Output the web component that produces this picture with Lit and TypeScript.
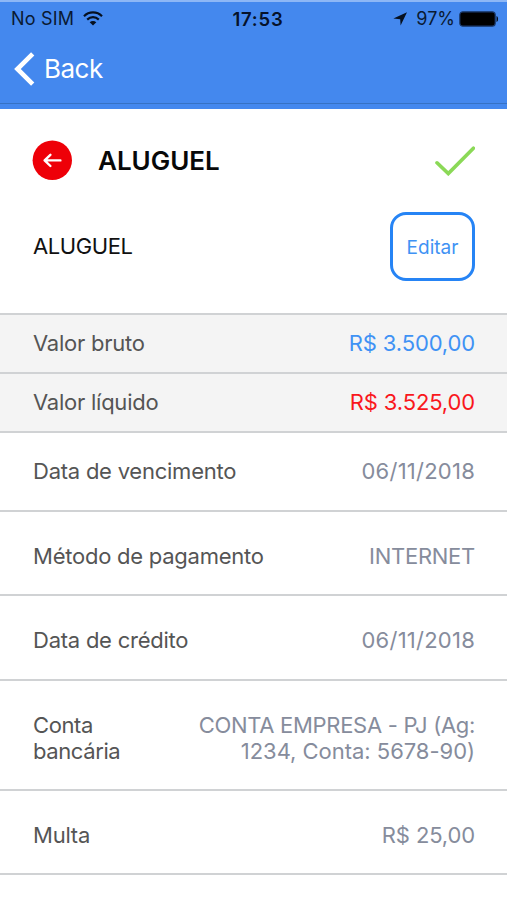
import { LitElement, html, css } from "lit";
import { customElement, property } from "lit/decorators.js";

@customElement("status-bar")
class StatusBar extends LitElement {
  static styles = css`
    :host { display: grid; grid-template-columns: 1fr auto 1fr; align-items: center; box-sizing: border-box; height: 32px; padding: 0 8px 0 11px; color: #0a1a33; font-size: 18px; line-height: 32px; }
    .side { display: flex; align-items: center; }
    .right { justify-content: flex-end; }
    .sim { letter-spacing: 0.2px; }
    .time { font-weight: 600; font-size: 18.5px; letter-spacing: 0.8px; padding-left: 6px; color: #06122a; }
    .wifi { margin-left: 9px; }
    .arrow { margin-right: 9px; }
    .pct { letter-spacing: 0; margin-right: 4px; }
    .sim, .time, .pct { padding-top: 1px; }
    svg { display: block; }
  `;
  render() {
    return html`
      <div class="side">
        <span class="sim">No SIM</span>
        <svg class="wifi" width="20" height="15" viewBox="0 0 20 15">
          <g fill="none" stroke="#06101f" stroke-width="2.2">
            <path d="M1 5.2C6 .2 14 .2 19 5.2" />
            <path d="M4.2 8.6C7.6 5.4 12.4 5.4 15.8 8.6" />
          </g>
          <path d="M6.7 11.2C8.6 9.5 11.4 9.5 13.3 11.2L10 14.6Z" fill="#06101f" />
        </svg>
      </div>
      <span class="time">17:53</span>
      <div class="side right">
        <svg class="arrow" width="14" height="14" viewBox="0 0 14 14"><path d="M14 .2L7.6 13.6L7.2 7.2L.4 6.4Z" fill="#06101f" /></svg>
        <span class="pct">97%</span>
        <svg width="40" height="16" viewBox="0 0 40 16">
          <rect x=".8" y=".8" width="35.4" height="14.4" rx="3" fill="#000" stroke="#1c3b6e" stroke-width="1.2" />
          <path d="M37.5 5C39.6 5.6 39.6 10.4 37.5 11Z" fill="#06101f" />
        </svg>
      </div>
    `;
  }
}

@customElement("detail-row")
class DetailRow extends LitElement {
  @property() label = "";
  @property() value = "";
  static styles = css`
    :host { display: flex; justify-content: space-between; align-items: flex-start; box-sizing: border-box; min-height: 84px; padding: 31px 32px 25px 33px; border-bottom: 2px solid #d0d2d4; font-size: 22px; line-height: 26px; color: #555; }
    :host([shaded]) { background: #f4f4f4; min-height: 59px; padding: 15px 32px 16px 33px; }
    :host([first]) { min-height: 79px; padding: 25px 32px 25px 33px; }
    :host([tall]) { min-height: 85px; }
    .label { max-width: 240px; letter-spacing: -0.24px; }
    :host([narrow]) .label { width: 110px; letter-spacing: -0.4px; }
    .value { max-width: 300px; text-align: right; color: #868c9c; letter-spacing: -0.13px; }
    :host([date]) .value { letter-spacing: 0.24px; }
    :host([caps]) .value { letter-spacing: -0.27px; }
    :host([narrow]) .value { letter-spacing: -0.03px; }
    :host([narrow]) .value::first-line { letter-spacing: -0.3px; }
    :host([tone="blue"]) .value { color: #3f92f4; }
    :host([tone="red"]) .value { color: #f9171c; }
  `;
  render() {
    return html`<div class="label">${this.label}</div><div class="value">${this.value}</div>`;
  }
}

@customElement("app-root")
class AppRoot extends LitElement {
  static styles = css`
    :host { display: block; height: 900px; overflow: hidden; background: #fff; font-family: Inter, "Liberation Sans", sans-serif; }
    .header { box-sizing: border-box; height: 109px; background: #4488ee; border-top: 2px solid #8db7f6; display: flex; flex-direction: column; }
    .nav { box-sizing: border-box; height: 70px; border-bottom: 1px solid #3672c4; display: flex; align-items: center; padding-left: 14px; color: #fff; font-size: 26px; letter-spacing: -0.5px; gap: 9px; }
    .nav svg { display: block; }
    .head { display: flex; align-items: center; height: 102px; padding: 0 32px 0 32px; }
    .title { flex: 1; margin-left: 26px; font-size: 26px; font-weight: 600; color: #080808; }
    .check { margin-top: 1px; }
    .sub { display: flex; align-items: flex-start; justify-content: space-between; height: 102px; padding: 1px 32px 0 33px; box-sizing: border-box; font-size: 22px; line-height: 68px; letter-spacing: -0.4px; color: #111; }
    .edit { box-sizing: border-box; width: 85px; height: 69px; border: 3px solid #2684f5; border-radius: 16px; color: #3f92f4; background: #fff; font: 19px Inter, sans-serif; padding: 2px 0 0; }
    .rows { border-top: 2px solid #d0d2d4; }
  `;
  render() {
    return html`
      <div class="header">
        <status-bar></status-bar>
        <div class="nav">
          <svg width="21" height="34" viewBox="0 0 21 34"><path d="M18.7 1.8L3.4 17L18.7 32.2" fill="none" stroke="#fff" stroke-width="4.6" /></svg>
          <span>Back</span>
        </div>
      </div>
      <div class="head">
        <svg width="40" height="40" viewBox="0 0 40 40">
          <circle cx="20.3" cy="20.3" r="19.7" fill="#ee0008" />
          <path d="M28.4 20.4H12.8M18.4 14.8L12.6 20.4L18.4 26" fill="none" stroke="#fff" stroke-width="2.4" stroke-linecap="round" stroke-linejoin="round" />
        </svg>
        <span class="title">ALUGUEL</span>
        <svg class="check" width="40" height="30" viewBox="0 0 40 30"><path d="M2 16.8L13.3 27.6L38.4 2.2" fill="none" stroke="#8bd957" stroke-width="3.6" stroke-linecap="round" /></svg>
      </div>
      <div class="sub"><span>ALUGUEL</span><button class="edit">Editar</button></div>
      <div class="rows">
        <detail-row shaded tone="blue" label="Valor bruto" value="R$ 3.500,00"></detail-row>
        <detail-row shaded tone="red" label="Valor líquido" value="R$ 3.525,00"></detail-row>
        <detail-row first date label="Data de vencimento" value="06/11/2018"></detail-row>
        <detail-row caps label="Método de pagamento" value="INTERNET"></detail-row>
        <detail-row tall date label="Data de crédito" value="06/11/2018"></detail-row>
        <detail-row narrow label="Conta bancária" value="CONTA EMPRESA - PJ (Ag: 1234, Conta: 5678-90)"></detail-row>
        <detail-row label="Multa" value="R$ 25,00"></detail-row>
      </div>
    `;
  }
}
